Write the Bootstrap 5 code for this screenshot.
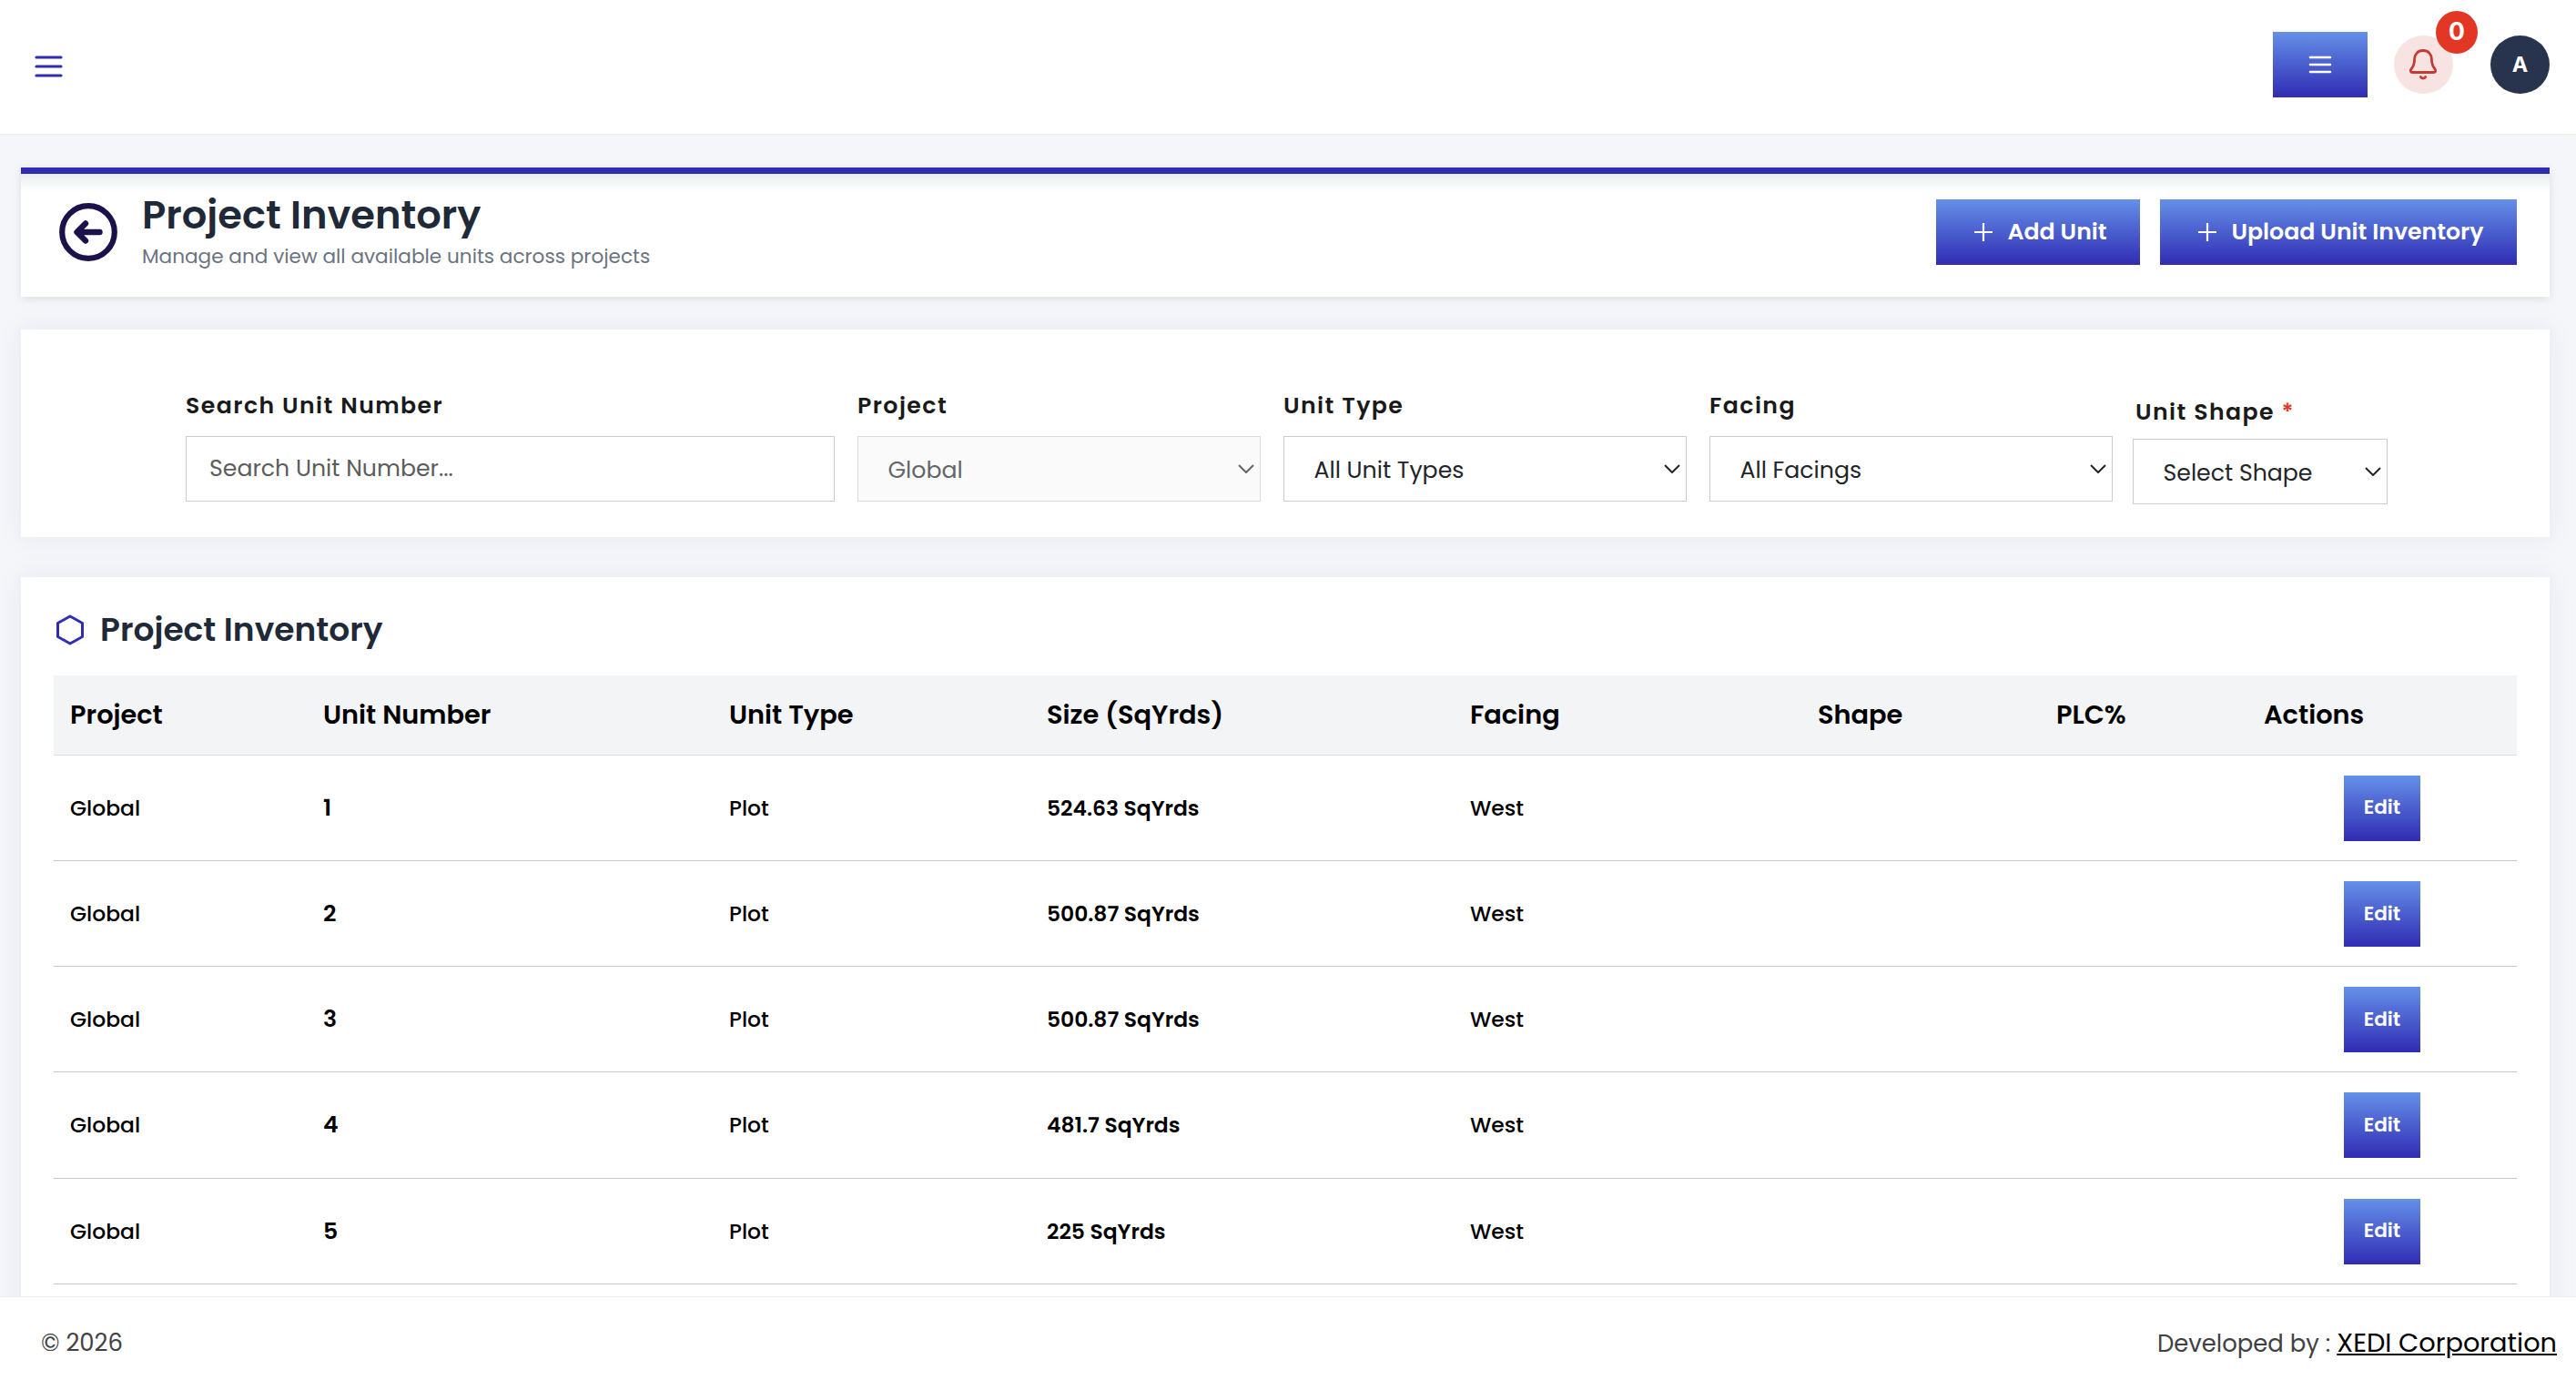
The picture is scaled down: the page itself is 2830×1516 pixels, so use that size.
<!DOCTYPE html>
<html lang="en">
<head>
  <meta charset="UTF-8" />
  <meta name="viewport" content="width=device-width, initial-scale=1" />
  <title>Project Inventory</title>
  <link href="https://cdn.jsdelivr.net/npm/bootstrap@5.3.3/dist/css/bootstrap.min.css" rel="stylesheet" />
  <style>
    body {
      font-family: Poppins, Inter, "Open Sans", sans-serif;
      font-size: 25.2px;
      line-height: 36px;
      color: #212529;
      background: #f5f6fa;
      overflow: hidden;
    }
    svg { display: block; }

    /* top bar */
    .topbar {
      height: 148px;
      padding: 0 29px 5px 38px;
      border-bottom: 1px solid #ebedf0;
    }
    .menu-icon { margin-top: 5px; }
    .btn-grad {
      display: inline-flex;
      align-items: center;
      justify-content: center;
      height: 72px;
      border: 0;
      border-radius: 0;
      color: #fff;
      font-size: 25.2px;
      font-weight: 600;
      background: linear-gradient(#6590e8, #302cb3);
    }
    .btn-grad:hover { color: #fff; }
    .btn-menu { width: 104px; margin-right: 29px; }
    .round-icon {
      width: 65px;
      height: 64px;
      border-radius: 50%;
    }
    .bell-icon { background: #f7e3e2; margin-right: 41px; padding-right: 1px; }
    .bell-count {
      position: absolute;
      top: -27px;
      left: 46px;
      width: 46px;
      height: 47px;
      border-radius: 50%;
      background: #e23725;
      color: #fff;
      font-family: Inter, sans-serif;
      font-size: 26.5px;
      font-weight: 700;
      padding-bottom: 3px;
    }
    .avatar { background: #28334e; color: #fff; font-family: Inter, sans-serif; font-size: 23.4px; font-weight: 700; }

    /* page header */
    .page-body { padding: 36px 29px 0 23px; }
    .panel { background: #fff; box-shadow: 0 0 30px rgba(40, 40, 90, .07); }
    .page-head {
      height: 142px;
      padding: 0 36px 0 42px;
      border-top: 7px solid #302cb3;
      background: linear-gradient(#e9eeee, #fff 20px);
      box-shadow: 0 2px 10px rgba(0, 0, 0, .1);
    }
    .head-text { margin: 19px 0 0 27px; }
    .page-title { font-size: 43.2px; line-height: 52px; font-weight: 600; color: #1f2937; }
    .page-sub { font-size: 21.6px; line-height: 32px; margin-top: 4px; color: #6b7280; }
    .btn-unit { width: 224px; padding: 0 0 0 6px; margin-right: 22px; }
    .btn-upload { width: 392px; padding: 0 0 0 6px; }

    /* filters */
    .filters { height: 228px; margin-top: 36px; padding: 66px 0 0 181px; gap: 25px; }
    .field-search { width: 713px; }
    .field-select { width: 443px; }
    .field-shape { width: 280px; margin: 7px 0 0 -3px; }
    .form-label { display: block; margin-bottom: 15px; font-weight: 600; color: #1a1a1a; letter-spacing: 1.44px; line-height: 36px; }
    .field-shape .form-label { margin-bottom: 11px; padding-left: 3px; }
    .required-mark { color: #e23725; }
    .form-control, .form-select {
      height: 72px;
      border: 1px solid #ccc;
      border-radius: 0;
      font-size: 25.2px;
      color: #212529;
    }
    .form-control { padding: 0 25px 1px; }
    .form-control::placeholder { color: #5c5c5c; }
    .form-select {
      padding: 3px 28px 0 32.5px;
      background: #fff url("data:image/svg+xml,%3csvg xmlns='http://www.w3.org/2000/svg' viewBox='0 0 18 10'%3e%3cpath fill='none' stroke='%23212529' stroke-width='2' d='M1 1l8 8 8-8'/%3e%3c/svg%3e") no-repeat right 6px center / 18px 10px;
    }
    .form-select:disabled { background-color: #f9f9f9; opacity: .7; }

    /* table */
    .list-panel { height: 900px; margin-top: 44px; padding: 35px 36px 0; }
    .list-icon { margin: 0 17px 0 2px; }
    .list-title { font-size: 36px; line-height: 46px; font-weight: 600; color: #1f2937; }
    .unit-table { table-layout: fixed; width: 2706px; margin-top: 27px; color: #000; }
    .unit-table th, .unit-table td { padding: 0 18px; vertical-align: middle; color: #000; }
    .unit-table th {
      height: 87px;
      font-size: 28.8px;
      font-weight: 600;
      background: #f2f4f6;
      border-bottom: 1px solid #dcdde6;
    }
    .unit-table td {
      height: 116.25px;
      padding-top: 1px;
      font-size: 23.4px;
      font-weight: 500;
      border-bottom: 1px solid #c9c9c9;
    }
    .unit-table .unit-no { font-size: 25.2px; font-weight: 600; }
    .unit-table .unit-size { font-weight: 600; }
    .btn-edit { width: 84px; padding: 0; font-size: 21.6px; }

    /* footer */
    .page-foot {
      height: 92px;
      padding: 9px 21px 0 45px;
      background: #fff;
      border-top: 1px solid #ebebeb;
      color: #3f4144;
      font-size: 25.9px;
    }
    .page-foot a { font-size: 28.8px; color: #000; margin-left: 7px; }
  </style>
</head>
<body>

<header class="topbar bg-white d-flex align-items-center">
  <svg class="menu-icon" width="31" height="25" viewBox="0 0 31 25" fill="none" stroke="#302cb3" stroke-width="3.2" stroke-linecap="round"><path d="M2 2h27M2 12h27M2 22h27" /></svg>
  <button class="btn btn-grad btn-menu ms-auto" type="button" aria-label="Menu">
    <svg width="26" height="20" viewBox="0 0 26 20" fill="none" stroke="#fff" stroke-width="2.6" stroke-linecap="round"><path d="M2 2h22M2 10h22M2 18h22" /></svg>
  </button>
  <div class="round-icon bell-icon position-relative d-flex align-items-center justify-content-center">
    <svg width="30" height="34" viewBox="0 0 30 34" fill="none" stroke="#c73a31" stroke-width="2.8" stroke-linecap="round" stroke-linejoin="round">
      <path d="M15 1.500C9 1.500 5.600 6 5.600 11c0 6-1.200 8-3.700 11-1.200 1.700-.4 3.500 1.300 3.500h23.600c1.700 0 2.500-1.800 1.300-3.500C25.600 19 24.400 17 24.400 11 24.400 6 21 1.500 15 1.500z" />
      <path d="M12.300 30.500c.8 2 4.600 2 5.400 0" />
    </svg>
    <span class="bell-count d-flex align-items-center justify-content-center">0</span>
  </div>
  <div class="round-icon avatar d-flex align-items-center justify-content-center">A</div>
</header>

<main class="page-body">
  <!-- Page header -->
  <section class="page-head d-flex align-items-start">
    <svg class="mt-4 pt-2" width="64" height="72" viewBox="0 0 64 64" fill="none" stroke="#1d114b" stroke-linecap="round" stroke-linejoin="round">
      <circle cx="32" cy="32" r="28.800" stroke-width="6.200" />
      <path d="M44.500 32H20M29 22.500L19.500 32l9.500 9.500" stroke-width="6.400" />
    </svg>
    <div class="head-text">
      <h1 class="page-title mb-0">Project Inventory</h1>
      <p class="page-sub mb-0">Manage and view all available units across projects</p>
    </div>
    <div class="d-flex ms-auto mt-4 pt-1">
      <button class="btn btn-grad btn-unit" type="button">
        <svg class="me-3" width="20" height="20" viewBox="0 0 20 20" stroke="#fff" stroke-width="2.200"><path d="M10 0v20M0 10h20" /></svg>Add Unit
      </button>
      <button class="btn btn-grad btn-upload" type="button">
        <svg class="me-3" width="20" height="20" viewBox="0 0 20 20" stroke="#fff" stroke-width="2.200"><path d="M10 0v20M0 10h20" /></svg>Upload Unit Inventory
      </button>
    </div>
  </section>

  <!-- Filters -->
  <section class="panel filters d-flex align-items-start">
    <div class="field-search">
      <label class="form-label" for="search">Search Unit Number</label>
      <input type="text" id="search" class="form-control" placeholder="Search Unit Number..." />
    </div>
    <div class="field-select">
      <label class="form-label" for="project">Project</label>
      <select id="project" class="form-select" disabled><option>Global</option></select>
    </div>
    <div class="field-select">
      <label class="form-label" for="unitType">Unit Type</label>
      <select id="unitType" class="form-select"><option>All Unit Types</option><option>Plot</option></select>
    </div>
    <div class="field-select">
      <label class="form-label" for="facing">Facing</label>
      <select id="facing" class="form-select"><option>All Facings</option><option>West</option></select>
    </div>
    <div class="field-shape">
      <label class="form-label" for="shape">Unit Shape <span class="required-mark">*</span></label>
      <select id="shape" class="form-select"><option>Select Shape</option></select>
    </div>
  </section>

  <!-- Units -->
  <section class="panel list-panel">
    <div class="d-flex align-items-center">
      <svg class="list-icon" width="32" height="34" viewBox="0 0 32 34" fill="none" stroke="#302cb3" stroke-width="3" stroke-linejoin="round"><path d="M16 2l13.500 7.500v15L16 32 2.500 24.500v-15z" /></svg>
      <h2 class="list-title mb-0">Project Inventory</h2>
    </div>
    <table class="unit-table">
      <colgroup>
        <col width="278" /><col width="446" /><col width="349" /><col width="465" />
        <col width="382" /><col width="262" /><col width="228" /><col width="296" />
      </colgroup>
      <thead>
        <tr><th>Project</th><th>Unit Number</th><th>Unit Type</th><th>Size (SqYrds)</th><th>Facing</th><th>Shape</th><th>PLC%</th><th>Actions</th></tr>
      </thead>
      <tbody>
        <tr>
          <td>Global</td><td class="unit-no">1</td><td>Plot</td><td class="unit-size">524.63 SqYrds</td><td>West</td><td></td><td></td>
          <td class="text-center"><button class="btn btn-grad btn-edit" type="button">Edit</button></td>
        </tr>
        <tr>
          <td>Global</td><td class="unit-no">2</td><td>Plot</td><td class="unit-size">500.87 SqYrds</td><td>West</td><td></td><td></td>
          <td class="text-center"><button class="btn btn-grad btn-edit" type="button">Edit</button></td>
        </tr>
        <tr>
          <td>Global</td><td class="unit-no">3</td><td>Plot</td><td class="unit-size">500.87 SqYrds</td><td>West</td><td></td><td></td>
          <td class="text-center"><button class="btn btn-grad btn-edit" type="button">Edit</button></td>
        </tr>
        <tr>
          <td>Global</td><td class="unit-no">4</td><td>Plot</td><td class="unit-size">481.7 SqYrds</td><td>West</td><td></td><td></td>
          <td class="text-center"><button class="btn btn-grad btn-edit" type="button">Edit</button></td>
        </tr>
        <tr>
          <td>Global</td><td class="unit-no">5</td><td>Plot</td><td class="unit-size">225 SqYrds</td><td>West</td><td></td><td></td>
          <td class="text-center"><button class="btn btn-grad btn-edit" type="button">Edit</button></td>
        </tr>
      </tbody>
    </table>
  </section>
</main>

<footer class="page-foot fixed-bottom d-flex align-items-center justify-content-between">
  <span>© 2026</span>
  <span>Developed by :<a href="#">XEDI Corporation</a></span>
</footer>

<script src="https://cdn.jsdelivr.net/npm/bootstrap@5.3.3/dist/js/bootstrap.bundle.min.js"></script>
</body>
</html>
